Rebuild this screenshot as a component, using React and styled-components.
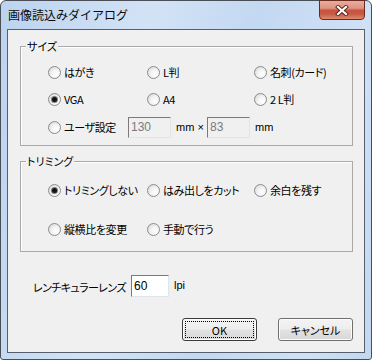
import React from 'react';
import styled, { createGlobalStyle } from 'styled-components';

const GlobalStyle = createGlobalStyle`
    html, body {
        margin: 0;
        padding: 0;
        background: #ffffff;
    }
    * {
        box-sizing: border-box;
    }
`;

const Window = styled.div`
    width: 372px;
    height: 360px;
    display: flex;
    flex-direction: column;
    padding: 0 6px 6px 6px;
    border: 1px solid #4a4f57;
    border-radius: 6px 6px 3px 3px;
    background: linear-gradient(100deg, #bcd3ef 0%, #d3e3f6 35%, #c3d8f1 60%, #d0e1f5 85%, #c2d7f0 100%);
    font-family: "Noto Sans CJK JP", sans-serif;
`;

const TitleBar = styled.div`
    height: 28px;
    display: flex;
    align-items: flex-start;
`;

const TitleText = styled.div`
    padding: 6px 0 0 1px;
    font-size: 12px;
    line-height: 16px;
    color: #0b0b0b;
`;

const CloseButton = styled.div`
    margin: -1px 0 0 auto;
    width: 46px;
    height: 20px;
    display: flex;
    align-items: center;
    justify-content: center;
    border: 1px solid #6b2a20;
    border-radius: 0 0 4px 4px;
    background: linear-gradient(to bottom, #e9ad9d 0%, #dc9482 40%, #c8523d 52%, #c65a44 72%, #df8a6c 100%);
`;

const Client = styled.div`
    flex: 1;
    display: flex;
    flex-direction: column;
    border: 1px solid #56606c;
    background: #f0f0f0;
    font-size: 11px;
    font-feature-settings: "palt";
    color: #000;
`;

const Group = styled.div`
    margin: ${({ $top }) => $top}px 11px 0 12px;
    height: ${({ $height }) => $height}px;
    display: flex;
    flex-direction: column;
    border: 1px solid #a9a9a9;
    box-shadow: inset 1px 1px 0 #ffffff;
`;

const Legend = styled.div`
    align-self: flex-start;
    margin: -8px 0 0 5px;
    padding: 0 1px;
    line-height: 14px;
    background: #f0f0f0;
`;

const OptionGrid = styled.div`
    margin-top: ${({ $top }) => $top}px;
    padding-left: 27px;
    display: grid;
    grid-template-columns: 99px 107px auto;
    grid-auto-rows: ${({ $rows }) => $rows};
    row-gap: ${({ $gap }) => $gap}px;
    align-items: center;
`;

const Option = styled.label`
    display: flex;
    align-items: center;
    gap: 3px;
    line-height: 14px;
    letter-spacing: -0.4px;
    white-space: nowrap;
    width: ${({ $width }) => ($width ? `${$width}px` : 'auto')};
`;

const Circle = styled.span`
    width: 13px;
    height: 13px;
    flex: none;
    display: flex;
    align-items: center;
    justify-content: center;
    border-radius: 50%;
    border: 1px solid #8b8c8e;
    background: radial-gradient(circle at 65% 65%, #ffffff 0%, #f4f4f4 40%, #d2d2d2 100%);

    &::after {
        content: '';
        width: 5px;
        height: 5px;
        border-radius: 50%;
        background: #141414;
        box-shadow: 0 0 0 1px #7d7d7d;
        display: ${({ $checked }) => ($checked ? 'block' : 'none')};
    }
`;

const CustomRow = styled.div`
    grid-column: 1 / -1;
    display: flex;
    align-items: center;
`;

const Field = styled.div`
    width: ${({ $width }) => $width}px;
    height: ${({ $height }) => $height}px;
    padding: 0 2px;
    display: flex;
    align-items: center;
    border: 1px solid;
    border-color: #7a7a7a #dfe5ec #dfe5ec #7a7a7a;
    background: ${({ $disabled }) => ($disabled ? '#f0f0f0' : '#ffffff')};
    color: ${({ $disabled }) => ($disabled ? '#7a7a7a' : '#000000')};
    font-family: "Liberation Sans", sans-serif;
    font-size: 12px;
`;

const Unit = styled.span`
    width: ${({ $width }) => ($width ? `${$width}px` : 'auto')};
    padding-left: 5px;
    font-family: "Liberation Sans", sans-serif;
    white-space: nowrap;
`;

const LensRow = styled.div`
    margin-top: 23px;
    padding-left: 25px;
    height: 22px;
    display: flex;
    align-items: center;
`;

const LensLabel = styled.span`
    width: 98px;
    margin-top: 2px;
    letter-spacing: -0.6px;
    white-space: nowrap;
`;

const Lpi = styled.span`
    align-self: flex-start;
    margin: 4px 0 0 5px;
    font-family: "Liberation Sans", sans-serif;
    line-height: 12px;
`;

const ButtonRow = styled.div`
    margin-top: 21px;
    padding-right: 11px;
    display: flex;
    justify-content: flex-end;
    gap: 21px;
`;

const Button = styled.div`
    width: 75px;
    height: 23px;
    padding: 2px;
    display: flex;
    border: 1px solid ${({ $default }) => ($default ? '#3c3c3c' : '#707070')};
    border-radius: 3px;
    background: linear-gradient(to bottom, #f4f4f4 0%, #ededed 48%, #e2e2e2 52%, #d8d8d8 100%);
    box-shadow: inset 0 0 0 1px #fcfcfc;
`;

const ButtonFace = styled.div`
    flex: 1;
    display: flex;
    align-items: center;
    justify-content: center;
    border: 1px dotted ${({ $focus }) => ($focus ? '#000' : 'transparent')};
    line-height: 14px;
`;

const CloseGlyph = () => (
    <svg width="14" height="11" viewBox="0 0 14 11">
        <path d="M3 2 L11 9 M11 2 L3 9" stroke="#5a2219" strokeWidth="4" strokeLinecap="square" />
        <path d="M3 2 L11 9 M11 2 L3 9" stroke="#ffffff" strokeWidth="2.2" strokeLinecap="square" />
    </svg>
);

const Radio = ({ label, checked, width }) => (
    <Option $width={width}>
        <Circle $checked={checked} />
        <span>{label}</span>
    </Option>
);

const App = () => {
    return (
        <>
            <GlobalStyle />
            <Window>
                <TitleBar>
                    <TitleText>画像読込みダイアログ</TitleText>
                    <CloseButton>
                        <CloseGlyph />
                    </CloseButton>
                </TitleBar>
                <Client>
                    <Group $top={16} $height={100}>
                        <Legend>サイズ</Legend>
                        <OptionGrid $top={9} $rows="20px 20px 22px" $gap={7}>
                            <Radio label="はがき" />
                            <Radio label="L判" />
                            <Radio label="名刺(カード)" />
                            <Radio label="VGA" checked />
                            <Radio label="A4" />
                            <Radio label="2 L判" />
                            <CustomRow>
                                <Radio label="ユーザ設定" width={80} />
                                <Field $width={43} $height={21} $disabled>130</Field>
                                <Unit $width={36}>mm ×</Unit>
                                <Field $width={43} $height={21} $disabled>83</Field>
                                <Unit>mm</Unit>
                            </CustomRow>
                        </OptionGrid>
                    </Group>
                    <Group $top={15} $height={91}>
                        <Legend>トリミング</Legend>
                        <OptionGrid $top={12} $rows="20px" $gap={19}>
                            <Radio label="トリミングしない" checked />
                            <Radio label="はみ出しをカット" />
                            <Radio label="余白を残す" />
                            <Radio label="縦横比を変更" />
                            <Radio label="手動で行う" />
                        </OptionGrid>
                    </Group>
                    <LensRow>
                        <LensLabel>レンチキュラーレンズ</LensLabel>
                        <Field $width={38} $height={22}>60</Field>
                        <Lpi>lpi</Lpi>
                    </LensRow>
                    <ButtonRow>
                        <Button $default>
                            <ButtonFace $focus>OK</ButtonFace>
                        </Button>
                        <Button>
                            <ButtonFace>キャンセル</ButtonFace>
                        </Button>
                    </ButtonRow>
                </Client>
            </Window>
        </>
    );
};

export default App;
